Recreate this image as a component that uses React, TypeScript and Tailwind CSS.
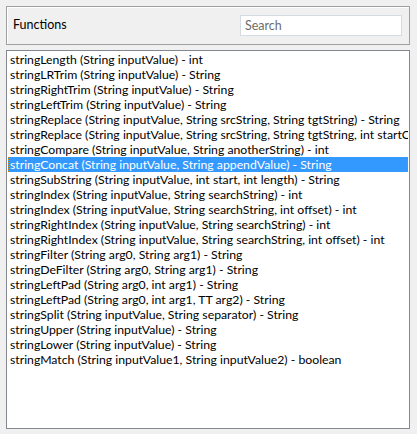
import { useState } from 'react'

const functions = [
  'stringLength (String inputValue) - int',
  'stringLRTrim (String inputValue) - String',
  'stringRightTrim (String inputValue) - String',
  'stringLeftTrim (String inputValue) - String',
  'stringReplace (String inputValue, String srcString, String tgtString) - String',
  'stringReplace (String inputValue, String srcString, String tgtString, int startOffset) - String',
  'stringCompare (String inputValue, String anotherString) - int',
  'stringConcat (String inputValue, String appendValue) - String',
  'stringSubString (String inputValue, int start, int length) - String',
  'stringIndex (String inputValue, String searchString) - int',
  'stringIndex (String inputValue, String searchString, int offset) - int',
  'stringRightIndex (String inputValue, String searchString) - int',
  'stringRightIndex (String inputValue, String searchString, int offset) - int',
  'stringFilter (String arg0, String arg1) - String',
  'stringDeFilter (String arg0, String arg1) - String',
  'stringLeftPad (String arg0, int arg1) - String',
  'stringLeftPad (String arg0, int arg1, TT arg2) - String',
  'stringSplit (String inputValue, String separator) - String',
  'stringUpper (String inputValue) - String',
  'stringLower (String inputValue) - String',
  'stringMatch (String inputValue1, String inputValue2) - boolean',
]

export default function App() {
  const [selected, setSelected] = useState(7)
  const [query, setQuery] = useState('')

  return (
    <div
      className="w-[417px] h-[434px] bg-[#f0f0f0] pt-[6px] px-[6px] flex flex-col gap-[5px] text-[12.25px] text-black overflow-hidden"
      style={{ fontFamily: 'Lato, "Noto Sans", sans-serif' }}
    >
      <div className="h-[39px] w-[404px] border border-[#a0a0a0] shadow-[inset_1px_1px_0_#ffffff] flex items-center justify-between pl-[6px] pr-[7px]">
        <span className="leading-none text-[12.5px]">Functions</span>
        <input
          value={query}
          onChange={(e) => setQuery(e.target.value)}
          placeholder="Search"
          className="w-[162px] h-[21px] bg-white border border-[#d5dbe3] px-[4px] text-[12.5px] outline-none placeholder:text-[#6d6d6d]"
        />
      </div>

      <div className="h-[379px] w-[404px] border border-[#828790] bg-white py-[1px] px-[1px] overflow-hidden">
        {functions
          .filter((f) => f.toLowerCase().includes(query.toLowerCase()))
          .map((f, i) => (
            <div
              key={i}
              onClick={() => setSelected(i)}
              className={`h-[15px] leading-[15px] pl-[2px] whitespace-nowrap overflow-hidden ${
                i === selected
                  ? 'bg-[#3399ff] text-white outline outline-1 outline-dotted outline-[#e07b00] -outline-offset-1'
                  : ''
              }`}
            >
              {f}
            </div>
          ))}
      </div>
    </div>
  )
}
